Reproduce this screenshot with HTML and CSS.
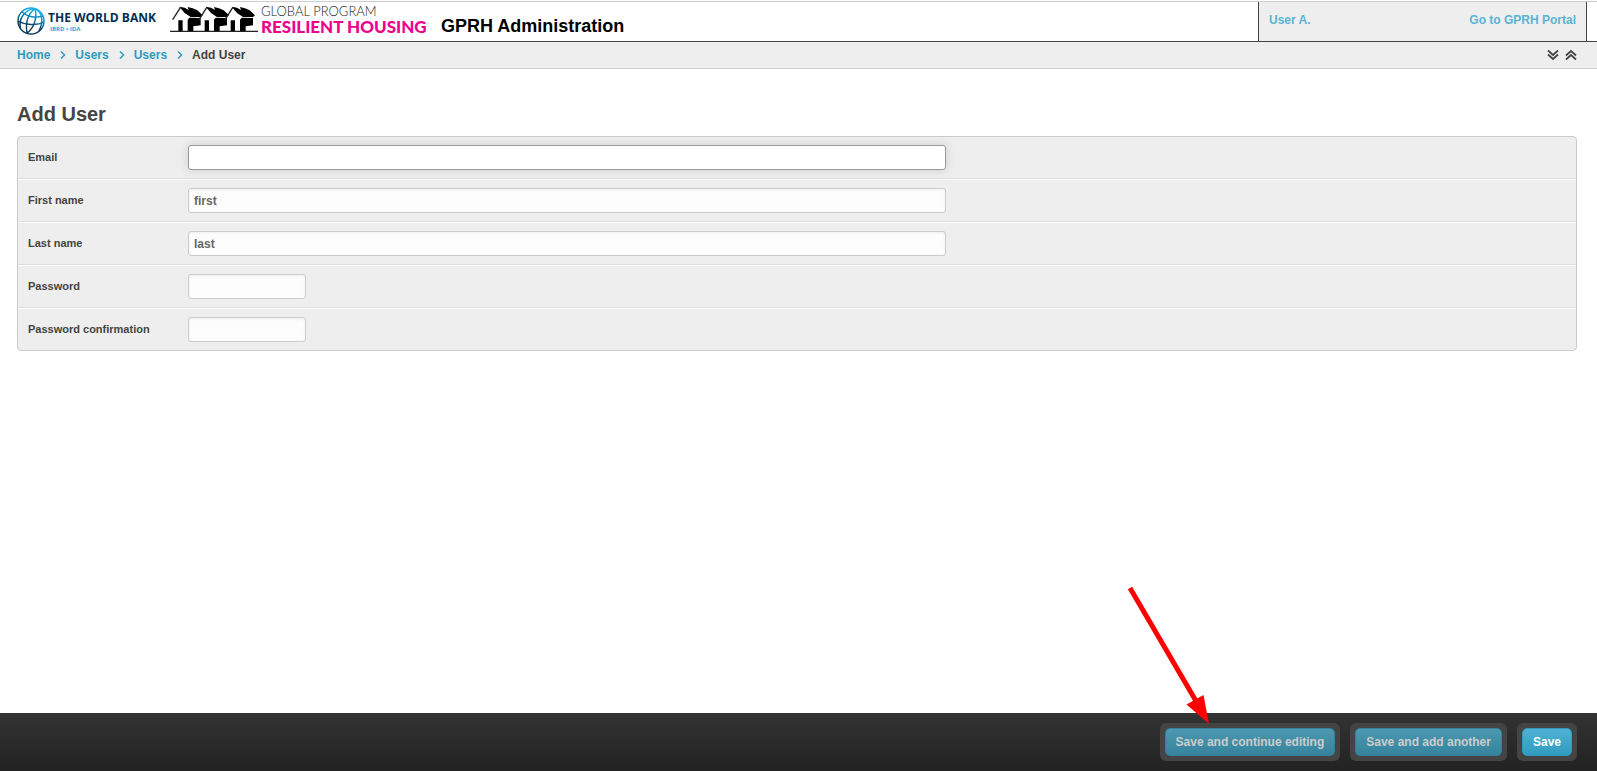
FILE: index.html
```html
<!DOCTYPE html>
<html lang="en">
<head>
<meta charset="utf-8">
<title>Add User | GPRH Administration</title>
<link rel="stylesheet" href="styles.css">
</head>
<body>
<header class="header">
  <div class="branding">
    <div class="bank">
      <svg class="globe" viewBox="0 0 28 28" aria-hidden="true">
        <defs>
          <linearGradient id="globe-ink" x1="9" y1="26" x2="18" y2="2" gradientUnits="userSpaceOnUse">
            <stop offset="0.3" stop-color="#0a3a5e"/>
            <stop offset="0.75" stop-color="#0a90cc"/>
            <stop offset="1" stop-color="#14b4f0"/>
          </linearGradient>
        </defs>
        <g fill="none" stroke="url(#globe-ink)" stroke-width="1.4">
          <circle cx="14" cy="14" r="13"/>
          <path d="M18 1.6C12 6 8 14 10 26.400M18 1.600C20 8 19 19 10 26.400M18 1.600C9 2 1 11 3.500 21.500M18 1.600C25 5 27 14 22 24"/>
          <path d="M5 5C11 10 19 11 26 9M1 14C8 18 20 19 27 15"/>
        </g>
      </svg>
      <div class="bank-text">
        <span class="bank-name">THE WORLD BANK</span>
        <span class="bank-sub">IBRD • IDA</span>
      </div>
    </div>
    <div class="program">
      <svg class="houses" viewBox="12 19 264 81" aria-hidden="true">
        <defs>
          <g id="house">
            <path d="M20 60L43 24" fill="none" stroke="#222" stroke-width="4"/>
            <path d="M40 21L56 24L68 31L65 22L80 26L94 32L110 47L104 52L74 52L56 40Z"/>
            <path d="M37 62H50V95H37ZM65 60L70 54L104 55V77L82 80V95H65Z"/>
          </g>
        </defs>
        <use href="#house"/>
        <use href="#house" x="79"/>
        <use href="#house" x="157"/>
        <path d="M12 95H276" stroke="#222" stroke-width="4"/>
      </svg>
      <div class="program-text">
        <span class="program-top">GLOBAL PROGRAM</span>
        <span class="program-name">RESILIENT HOUSING</span>
      </div>
    </div>
    <div class="site-title">GPRH Administration</div>
  </div>
  <nav class="user-tools" aria-label="User">
    <a href="#">User A.</a>
    <a href="#">Go to GPRH Portal</a>
  </nav>
</header>

<nav class="breadcrumbs" aria-label="Breadcrumbs">
  <div class="trail">
    <a href="#">Home</a>
    <svg class="sep" viewBox="0 0 6 8" aria-hidden="true"><path d="M1 0.500L4.500 4L1 7.500"/></svg>
    <a href="#">Users</a>
    <svg class="sep" viewBox="0 0 6 8" aria-hidden="true"><path d="M1 0.500L4.500 4L1 7.500"/></svg>
    <a href="#">Users</a>
    <svg class="sep" viewBox="0 0 6 8" aria-hidden="true"><path d="M1 0.500L4.500 4L1 7.500"/></svg>
    <span>Add User</span>
  </div>
  <div class="toggles">
    <button type="button" aria-label="Expand all"><svg viewBox="0 0 10 10"><path d="M0 0.500L5 5L10 0.500M0 4.500L5 9L10 4.500"/></svg></button>
    <button type="button" aria-label="Collapse all"><svg viewBox="0 0 10 10"><path d="M0 5.500L5 1L10 5.500M0 9.500L5 5L10 9.500"/></svg></button>
  </div>
</nav>

<form class="content" id="user-form">
  <h1>Add User</h1>
  <div class="module">
    <div class="row"><label for="email">Email</label><div class="field"><input class="wide focused" id="email" type="text"></div></div>
    <div class="row"><label for="first">First name</label><div class="field"><input class="wide" id="first" type="text" value="first"></div></div>
    <div class="row"><label for="last">Last name</label><div class="field"><input class="wide" id="last" type="text" value="last"></div></div>
    <div class="row"><label for="pw1">Password</label><div class="field"><input class="short" id="pw1" type="password"></div></div>
    <div class="row"><label for="pw2">Password confirmation</label><div class="field"><input class="short" id="pw2" type="password"></div></div>
  </div>
</form>

<footer class="submit-row">
  <div class="holder"><button class="secondary" type="submit" form="user-form">Save and continue editing</button></div>
  <div class="holder"><button class="secondary" type="submit" form="user-form">Save and add another</button></div>
  <div class="holder"><button type="submit" form="user-form">Save</button></div>
</footer>

<svg class="pointer" viewBox="0 0 86 142" aria-hidden="true">
  <path d="M4 4L70 117" stroke="#f00" stroke-width="5"/>
  <path d="M60.500 120.500L77.500 111L83 140Z" fill="#f00"/>
</svg>
</body>
</html>
```
FILE: styles.css
```css
* {
  box-sizing: border-box;
}

body {
  display: flex;
  flex-direction: column;
  min-height: 100vh;
  margin: 0;
  padding-top: 1px;
  background: #fff;
  color: #444;
  font: bold 12px/16px "Liberation Sans", Arial, sans-serif;
}

a {
  color: #309bbf;
  text-decoration: none;
}

.header {
  display: flex;
  justify-content: space-between;
  height: 41px;
  padding: 0 10px 0 17px;
  border-top: 1px solid #ccc;
  border-bottom: 1px solid #444;
}

.branding,
.bank,
.program {
  display: flex;
  align-items: flex-start;
}

.bank {
  width: 153px;
  padding-top: 5px;
  gap: 3px;
}

.globe {
  width: 28px;
  height: 28px;
}

.bank-text,
.program-text {
  display: flex;
  flex-direction: column;
  white-space: nowrap;
}

.bank-text {
  padding-top: 3px;
}

.bank-name {
  color: #002f54;
  font: bold 12px/15px "Open Sans", sans-serif;
}

.bank-sub {
  padding-left: 2px;
  color: #1cabe2;
  font: bold 6px/8px "Open Sans", sans-serif;
}

.program {
  width: 271px;
  gap: 3px;
  padding-top: 2px;
}

.houses {
  width: 88px;
  height: 27px;
  margin-top: 2px;
}

.program-top {
  color: #222;
  font: 300 13px/15px Lato, sans-serif;
}

.program-name {
  color: #ec008c;
  font: 900 17px/16px Lato, sans-serif;
}

.site-title {
  padding-top: 14px;
  color: #000;
  font-size: 18px;
  line-height: 20px;
}

.user-tools {
  display: flex;
  justify-content: space-between;
  width: 329px;
  padding: 10px;
  border: solid #444;
  border-width: 0 1px;
  background: #eee;
}

.user-tools a {
  color: #59b4d4;
}

.breadcrumbs {
  display: flex;
  align-items: center;
  justify-content: space-between;
  height: 27px;
  padding: 0 21px 0 17px;
  border-bottom: 1px solid #ccc;
  background: #eee;
}

.trail,
.toggles {
  display: flex;
  align-items: center;
}

.sep {
  width: 6px;
  height: 8px;
  margin: 0 9px 0 10px;
  fill: none;
  stroke: #309bbf;
  stroke-width: 1.5;
}

.toggles {
  gap: 8px;
}

.toggles button {
  display: flex;
  padding: 0;
  border: 0;
  background: none;
}

.toggles svg {
  width: 10px;
  height: 10px;
  fill: none;
  stroke: #444;
  stroke-width: 1.7;
  overflow: visible;
}

.content {
  flex: 1;
  padding: 33px 20px 78px 17px;
}

h1 {
  margin: 0 0 10px;
  font-size: 20px;
  line-height: 24px;
}

.module {
  border: 1px solid #ccc;
  border-radius: 4px;
  background: #eee;
}

.row {
  display: flex;
  align-items: flex-start;
  padding: 8px 10px;
  border-top: 1px solid #fff;
  border-bottom: 1px solid #ddd;
}

.row:first-child {
  border-top: 0;
  border-radius: 4px 4px 0 0;
}

.row:last-child {
  border-bottom: 0;
}

.row label {
  width: 160px;
  padding-top: 4px;
  font-size: 11px;
}

.field {
  flex: 1;
}

.field input {
  display: block;
  height: 25px;
  padding: 0 5px;
  border: 1px solid #ccc;
  border-radius: 3px;
  outline: 0;
  background: #fdfdfd;
  box-shadow: inset 0 1px 3px #eee;
  color: #666;
  font: inherit;
}

.field .wide {
  width: 100%;
  max-width: 758px;
}

.field .short {
  width: 118px;
}

.field .focused {
  border-color: #999;
  background: #fff;
  box-shadow: 0 0 10px #ccc;
}

.submit-row {
  position: fixed;
  right: 0;
  bottom: 0;
  left: 0;
  display: flex;
  justify-content: flex-end;
  gap: 10px;
  padding: 10px 20px;
  background: linear-gradient(#333, #222);
}

.holder {
  padding: 5px;
  border-radius: 6px;
  background: #444;
}

.holder button {
  display: block;
  height: 28px;
  padding: 0 10px;
  border: 1px solid #309bbf;
  border-radius: 5px;
  background: linear-gradient(#4fb2d3, #309bbf);
  color: #fff;
  font: inherit;
}

.holder .secondary {
  border-color: #35819a;
  background: linear-gradient(#4c98af, #35839d);
  color: #ccc;
}

.pointer {
  position: fixed;
  right: 385px;
  bottom: 45px;
  width: 86px;
  height: 142px;
  pointer-events: none;
}
```
